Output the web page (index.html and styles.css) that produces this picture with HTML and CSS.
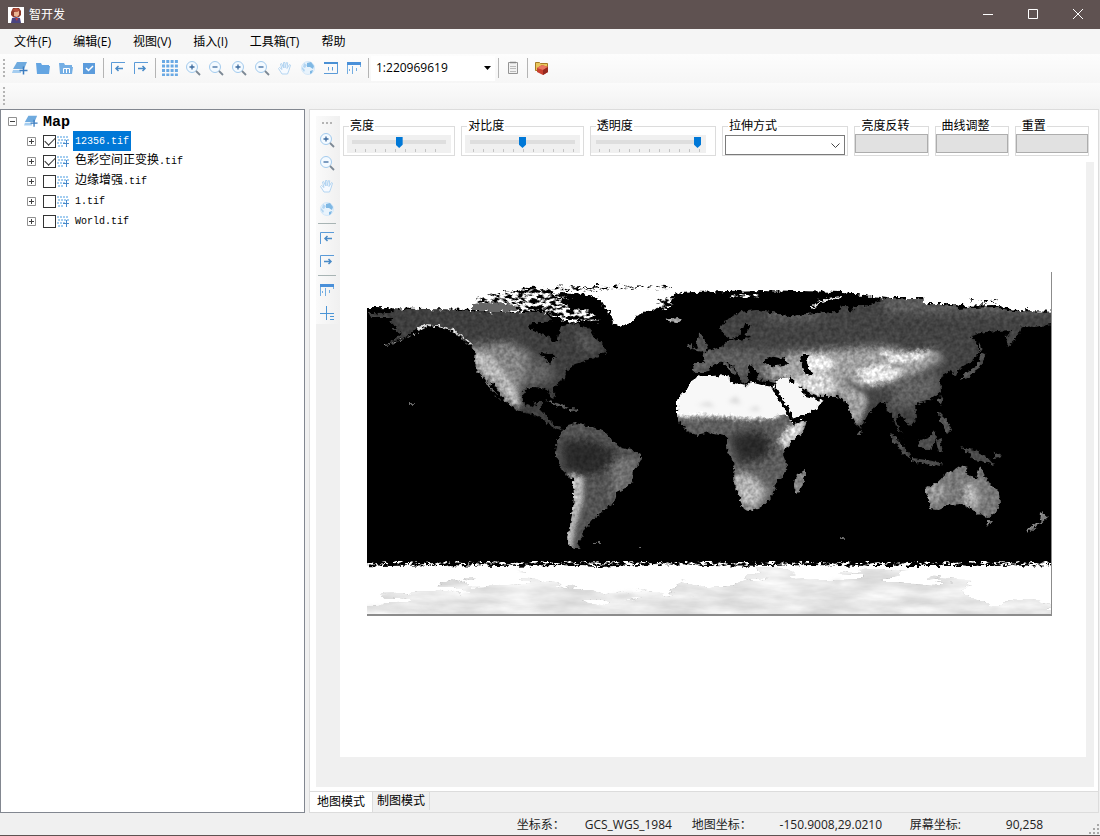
FILE: index.html
```html
<!DOCTYPE html>
<html lang="zh-CN">
<head>
  <meta charset="UTF-8">
  <meta name="viewport" content="width=device-width, initial-scale=1.0">
  <title>智开发</title>
  <link rel="stylesheet" href="styles.css">
</head>
<body>
  <svg class="sprite" aria-hidden="true">
    <symbol id="i-layer" viewBox="0 0 16 16"><path fill="#6faade" d="M5 2h10l-3 7H1z"/><path fill="#a5cdf0" d="M1 10h8v3H0z"/><path stroke="#3b7cc0" stroke-width="1.5" d="M11.500 6.500v8M7.500 10.500h8"/></symbol>
    <symbol id="i-folder" viewBox="0 0 16 16"><path fill="#64a5e2" d="M1 3h5l1 2h7v1h1l-1 8H2z"/></symbol>
    <symbol id="i-folder2" viewBox="0 0 16 16"><path fill="#74aee4" d="M1 3h5l1 2h7v2h1l-1 7H2z"/><path fill="none" stroke="#fff" d="M5.500 13V8.500h6V13M8.500 9v4"/></symbol>
    <symbol id="i-check" viewBox="0 0 16 16"><path fill="#5c9cdc" d="M2 3h12v11H2z"/><path fill="none" stroke="#fff" stroke-width="1.500" d="M5 8l2.500 2.500L12 6"/></symbol>
    <symbol id="i-prev" viewBox="0 0 16 16"><path fill="none" stroke="#5b9bd8" d="M1.500 14V2.500H15"/><path fill="none" stroke="#4a8bc8" stroke-width="1.500" d="M13 8.500H6M8.500 6L6 8.500 8.500 11"/></symbol>
    <symbol id="i-next" viewBox="0 0 16 16"><path fill="none" stroke="#5b9bd8" d="M1.500 14V2.500H15"/><path fill="none" stroke="#4a8bc8" stroke-width="1.500" d="M5 8.500h7M9.500 6L12 8.500 9.500 11"/></symbol>
    <symbol id="i-grid" viewBox="0 0 16 16"><path fill="none" stroke="#6aa9e4" stroke-width="3" stroke-dasharray="3 1.300" d="M0 1.500h16M0 6h16M0 10.500h16M0 15h16"/></symbol>
    <symbol id="i-zoomin" viewBox="0 0 16 16"><circle cx="7" cy="7" r="5.500" fill="#f4faff" stroke="#a3cbee"/><path stroke="#3c6a9e" stroke-width="1.300" d="M7 4.500v5M4.500 7h5"/><path stroke="#7c8894" stroke-width="1.800" d="M11 11l4 4"/></symbol>
    <symbol id="i-zoomout" viewBox="0 0 16 16"><circle cx="7" cy="7" r="5.500" fill="#f4faff" stroke="#a3cbee"/><path stroke="#3c6a9e" stroke-width="1.300" d="M4.500 7h5"/><path stroke="#7c8894" stroke-width="1.800" d="M11 11l4 4"/></symbol>
    <symbol id="i-hand" viewBox="0 0 16 16"><path fill="#f6faff" stroke="#b4d5f1" d="M5 14L1.500 8.500l1-1L5 9.500 3.500 4l1.200-.5L6.500 8V2.500H8V8l1.500-5.500 1.200.3L10 8.500l2.500-4 1 .6-1.500 5L10.500 14z"/></symbol>
    <symbol id="i-globe" viewBox="0 0 16 16"><circle cx="8" cy="8" r="6.500" fill="#e8f3fc" stroke="#d5e8f8"/><path fill="#b2d5f2" d="M2 7l3 3-1 2-2-3zM4 3l3 2-2 3-2-1z"/><path fill="#7fb8e4" d="M7 3l4-1 3 4-1 3-3-2-3 0zM10 11l3-1-1 3-2 1z"/></symbol>
    <symbol id="i-one" viewBox="0 0 16 16"><path fill="none" stroke="#5b9bd8" d="M1 3.500h13.500v10H1M5.500 7v3.500M9.500 7v3.500"/><path fill="#4a90d4" d="M1 2h14v2H1z"/></symbol>
    <symbol id="i-table" viewBox="0 0 16 16"><path fill="#4a90d9" d="M1 2h14v3H1z"/><path fill="none" stroke="#74aee2" d="M1.500 5v9M6.500 6v8M10.500 8v3M14.500 5v2M3.500 9v2"/></symbol>
    <symbol id="i-cross" viewBox="0 0 16 16"><path fill="none" stroke="#4b95d6" d="M1 8.500h14M7.500 1v14M11 11.500h4M11 14.500h4"/></symbol>
    <symbol id="i-clip" viewBox="0 0 16 16"><path fill="#f2f2f2" stroke="#949494" d="M3.500 2.500h9v11h-9z"/><path fill="none" stroke="#858585" stroke-width="1.500" d="M5 2.500h6"/><path stroke="#bbb" d="M5 6.500h6M5 8.500h6M5 11.500h6"/></symbol>
    <symbol id="i-toolbox" viewBox="0 0 16 16"><path fill="#e8c65c" stroke="#a77b25" d="M1.500 2.500h4l1 1h7v7h-12z"/><path fill="#c9402f" d="M3 8l5-3 6 2v5l-5 3-6-3z"/><path fill="#e87660" d="M3 8l5-3 6 2-5 3z"/><path fill="#96281f" d="M9 10l5-3v5l-5 3z"/></symbol>
    <symbol id="i-raster" viewBox="0 0 14 14"><path fill="none" stroke="#a3cdf0" stroke-width="2" stroke-dasharray="2 1" d="M1 3h12M2 6h11M1 9h8M2 12h6"/><path stroke="#4a8bcb" d="M10.500 6v7M7 9.500h6"/></symbol>
    <symbol id="i-plus" viewBox="0 0 9 9"><path fill="#fff" stroke="#919191" d="M.5.5h8v8h-8z"/><path stroke="#404040" d="M2 4.500h5M4.500 2v5"/></symbol>
    <symbol id="i-minus" viewBox="0 0 9 9"><path fill="#fff" stroke="#919191" d="M.5.5h8v8h-8z"/><path stroke="#404040" d="M2 4.500h5"/></symbol>
  </svg>

  <header class="titlebar">
    <svg class="app-icon" viewBox="0 0 16 16"><path fill="#fff" d="M0 0h16v16H0z"/><path fill="#8e3a2b" d="M3 5l2-4h6l2 3v4l-2 2H5L3 8z"/><path fill="#eab391" d="M6 5l5-1v4l-2 2-3-1z"/><path fill="#b5513d" d="M4 3l4-2 4 2-3 2z"/><path fill="#4a4480" d="M3 16l1-5 4-1 4 1 1 5z"/><path fill="#c23d36" d="M7 11h3l-1 3z"/></svg>
    <span class="app-name">智开发</span>
    <div class="win-buttons">
      <button aria-label="最小化"><svg viewBox="0 0 10 10"><path d="M0 5.500h10"/></svg></button>
      <button aria-label="最大化"><svg viewBox="0 0 10 10"><path d="M.5.5h9v9h-9z"/></svg></button>
      <button aria-label="关闭"><svg viewBox="0 0 10 10"><path d="M0 0l10 10M10 0L0 10"/></svg></button>
    </div>
  </header>

  <nav class="menubar">
    <button>文件(F)</button>
    <button>编辑(E)</button>
    <button>视图(V)</button>
    <button>插入(I)</button>
    <button>工具箱(T)</button>
    <button>帮助</button>
  </nav>

  <div class="toolbar">
    <span class="grip"></span>
    <button aria-label="添加图层"><svg><use href="#i-layer"/></svg></button>
    <button aria-label="打开"><svg><use href="#i-folder"/></svg></button>
    <button aria-label="打开地图"><svg><use href="#i-folder2"/></svg></button>
    <button aria-label="保存"><svg><use href="#i-check"/></svg></button>
    <span class="sep"></span>
    <button aria-label="上一视图"><svg><use href="#i-prev"/></svg></button>
    <button aria-label="下一视图"><svg><use href="#i-next"/></svg></button>
    <span class="sep"></span>
    <button aria-label="网格"><svg><use href="#i-grid"/></svg></button>
    <button aria-label="中心放大"><svg><use href="#i-zoomin"/></svg></button>
    <button aria-label="中心缩小"><svg><use href="#i-zoomout"/></svg></button>
    <button aria-label="放大"><svg><use href="#i-zoomin"/></svg></button>
    <button aria-label="缩小"><svg><use href="#i-zoomout"/></svg></button>
    <button aria-label="漫游"><svg><use href="#i-hand"/></svg></button>
    <button aria-label="全图"><svg><use href="#i-globe"/></svg></button>
    <button aria-label="原始比例"><svg><use href="#i-one"/></svg></button>
    <button aria-label="属性表"><svg><use href="#i-table"/></svg></button>
    <span class="sep"></span>
    <div class="combo scale">
      <select aria-label="比例尺"><option>1:220969619</option></select>
      <svg class="arrow" viewBox="0 0 8 4"><path d="M0 0h7L3.500 4z"/></svg>
    </div>
    <span class="sep"></span>
    <button aria-label="剪贴板"><svg><use href="#i-clip"/></svg></button>
    <span class="sep"></span>
    <button aria-label="工具箱"><svg><use href="#i-toolbox"/></svg></button>
  </div>
  <div class="toolbar second"><span class="grip"></span></div>

  <main class="workspace">
    <aside class="tree">
      <ul>
        <li class="root"><svg class="exp"><use href="#i-minus"/></svg><svg class="layer"><use href="#i-layer"/></svg><b>Map</b></li>
        <li><svg class="exp"><use href="#i-plus"/></svg><input type="checkbox" id="l1" checked><svg class="layer"><use href="#i-raster"/></svg><label for="l1" class="selected">12356.tif</label></li>
        <li><svg class="exp"><use href="#i-plus"/></svg><input type="checkbox" id="l2" checked><svg class="layer"><use href="#i-raster"/></svg><label for="l2"><span>色彩空间正变换</span>.tif</label></li>
        <li><svg class="exp"><use href="#i-plus"/></svg><input type="checkbox" id="l3"><svg class="layer"><use href="#i-raster"/></svg><label for="l3"><span>边缘增强</span>.tif</label></li>
        <li><svg class="exp"><use href="#i-plus"/></svg><input type="checkbox" id="l4"><svg class="layer"><use href="#i-raster"/></svg><label for="l4">1.tif</label></li>
        <li><svg class="exp"><use href="#i-plus"/></svg><input type="checkbox" id="l5"><svg class="layer"><use href="#i-raster"/></svg><label for="l5">World.tif</label></li>
      </ul>
    </aside>

    <section class="tabs">
      <div class="page">
        <div class="side-tools">
          <div class="vbar">
            <span class="grip"></span>
            <button aria-label="放大"><svg><use href="#i-zoomin"/></svg></button>
            <button aria-label="缩小"><svg><use href="#i-zoomout"/></svg></button>
            <button aria-label="漫游"><svg><use href="#i-hand"/></svg></button>
            <button aria-label="全图"><svg><use href="#i-globe"/></svg></button>
            <span class="sep"></span>
            <button aria-label="上一视图"><svg><use href="#i-prev"/></svg></button>
            <button aria-label="下一视图"><svg><use href="#i-next"/></svg></button>
            <span class="sep"></span>
            <button aria-label="属性表"><svg><use href="#i-table"/></svg></button>
            <button aria-label="十字线"><svg><use href="#i-cross"/></svg></button>
          </div>
        </div>
        <div class="content">
          <form class="controls">
            <fieldset class="g-light"><legend>亮度</legend><div class="slider"><input type="range" aria-label="亮度" value="50"></div></fieldset>
            <fieldset class="g-contrast"><legend>对比度</legend><div class="slider"><input type="range" aria-label="对比度" value="50"></div></fieldset>
            <fieldset class="g-wide"><legend>透明度</legend><div class="slider short"><input type="range" aria-label="透明度" value="100"></div></fieldset>
            <fieldset class="g-wide"><legend>拉伸方式</legend><div class="combo stretch"><select aria-label="拉伸方式"><option></option></select><svg class="arrow" viewBox="0 0 9 5"><path d="M.5.5l4 4 4-4"/></svg></div></fieldset>
            <fieldset class="g-button"><legend>亮度反转</legend><button type="button" aria-label="亮度反转"></button></fieldset>
            <fieldset class="g-button"><legend>曲线调整</legend><button type="button" aria-label="曲线调整"></button></fieldset>
            <fieldset class="g-button"><legend>重置</legend><button type="button" aria-label="重置"></button></fieldset>
          </form>
          <div class="canvas">
            <svg class="map" viewBox="367 272 685 344" role="img" aria-label="World">
              <defs>
                <filter id="rough" x="-5%" y="-5%" width="110%" height="110%" color-interpolation-filters="sRGB">
                  <feTurbulence type="fractalNoise" baseFrequency=".2" numOctaves="3" seed="4" result="n"/>
                  <feDisplacementMap in="SourceGraphic" in2="n" scale="8" xChannelSelector="R" yChannelSelector="G"/>
                </filter>
                <filter id="land" x="-5%" y="-5%" width="110%" height="110%" color-interpolation-filters="sRGB">
                  <feTurbulence type="fractalNoise" baseFrequency=".25" numOctaves="4" seed="9" result="n"/>
                  <feDisplacementMap in="SourceGraphic" in2="n" scale="6" xChannelSelector="R" yChannelSelector="G" result="d"/>
                  <feColorMatrix in="n" type="matrix" values="1.600 0 0 0 -.3  1.600 0 0 0 -.3  1.600 0 0 0 -.3  0 0 0 0 1" result="g"/>
                  <feComposite in="d" in2="g" operator="arithmetic" k1=".4" k2=".78" k3="0" k4="0"/>
                </filter>
                <filter id="ice" x="-5%" y="-5%" width="110%" height="110%" color-interpolation-filters="sRGB">
                  <feTurbulence type="fractalNoise" baseFrequency=".02 .08" numOctaves="4" seed="3" result="n"/>
                  <feDisplacementMap in="SourceGraphic" in2="n" scale="40" xChannelSelector="R" yChannelSelector="G" result="d"/>
                  <feColorMatrix in="n" type="matrix" values="1 0 0 0 0  1 0 0 0 0  1 0 0 0 0  0 0 0 0 1" result="g"/>
                  <feComposite in="d" in2="g" operator="arithmetic" k1=".25" k2=".84" k3="0" k4="0"/>
                </filter>
                <filter id="speckle" color-interpolation-filters="sRGB">
                  <feTurbulence type="fractalNoise" baseFrequency=".16 .3" numOctaves="4" seed="7" result="n"/>
                  <feColorMatrix type="matrix" values="5 0 0 0 -2  5 0 0 0 -2  5 0 0 0 -2  0 0 0 0 1" result="s"/>
                  <feDisplacementMap in="SourceGraphic" in2="n" scale="12" xChannelSelector="R" yChannelSelector="G" result="d"/>
                  <feComposite in="s" in2="d" operator="in"/>
                </filter>
                <filter id="soft" x="-50%" y="-50%" width="200%" height="200%"><feGaussianBlur stdDeviation="4"/></filter>
                <filter id="soft2" x="-50%" y="-50%" width="200%" height="200%"><feGaussianBlur stdDeviation="2"/></filter>
                <clipPath id="c-america"><path id="america" d="M368 312L380 314 395 310 430 308 470 311 520 312 545 312 552 320 545 323 532 323 529 328 537 333 548 336 553 342 558 341 559 334 562 325 575 323 590 329 595 338 603 345 606 353 596 356 585 361 575 364 566 372 565 378 556 385 553 389 556 398 551 397 547 389 535 387 525 389 522 395 524 404 533 407 536 402 543 402 540 410 547 417 553 425 562 427 557 430 548 424 538 416 525 413 512 407 504 400 494 384 490 382 499 397 500 400 492 391 485 379 477 370 474 360 475 352 470 345 462 340 452 331 440 327 428 325 420 327 405 337 390 343 402 334 393 329 388 322 372 319z"/></clipPath>
                <clipPath id="c-south"><path id="south" d="M561 431L568 425 575 423 590 426 605 432 612 440 622 448 632 450 641 455 641 460 634 470 632 482 625 488 617 492 614 503 605 509 600 515 595 517 590 523 585 528 582 533 583 537 578 543 577 546 582 549 574 549 568 543 567 538 570 525 573 510 574 495 573 479 566 475 559 464 555 453 557 440 561 435z"/></clipPath>
                <clipPath id="c-africa"><path id="africa" d="M677 412L677 400 685 392 692 383 700 376 712 376 727 375 730 382 745 386 750 382 765 386 774 388 780 400 789 416 793 424 807 421 803 432 792 441 786 448 783 455 787 465 785 473 778 480 775 488 770 498 762 507 750 510 744 509 740 500 736 488 732 478 735 468 732 460 726 448 727 440 724 435 710 432 697 435 688 432 680 424 677 418z"/></clipPath>
                <clipPath id="c-eurasia"><path id="eurasia" d="M693 362L705 362 702 353 712 350 722 346 728 341 738 340 750 338 745 334 748 325 742 329 738 337 733 339 724 335 720 329 727 320 740 312 758 310 778 313 787 317 800 315 815 313 838 312 842 305 848 305 850 313 855 306 866 306 885 298 924 299 926 304 955 305 957 309 993 307 1013 311 1052 312 1052 324 1035 327 1022 326 1015 340 1008 346 1006 338 1011 330 985 332 971 336 978 345 978 355 970 362 960 368 956 377 951 370 944 374 940 381 941 392 930 400 920 403 915 406 917 417 910 427 905 420 900 414 896 419 900 431 904 438 896 426 892 415 887 411 885 402 880 402 875 407 867 416 861 428 857 426 852 417 848 404 838 396 820 396 812 394 802 388 790 376 778 377 775 383 767 381 758 380 757 371 750 364 748 374 748 382 742 383 738 374 730 363 726 362 737 373 733 374 722 362 710 367 706 373 694 373z"/></clipPath>
                <clipPath id="c-aus"><path id="aus" d="M926 487L938 482 945 474 955 470 961 466 968 468 966 474 976 479 980 466 984 475 990 484 999 493 1000 503 996 513 988 517 978 514 970 508 962 505 945 506 937 510 930 509 929 500 926 493z"/></clipPath>
              </defs>

              <path d="M367 300h685v268H367z"/>
              <path d="M555 290h498v14H555z"/>

              <!-- America -->
              <g filter="url(#land)">
                <use href="#america" fill="#404040"/>
                <g clip-path="url(#c-america)">
                  <path filter="url(#soft)" fill="#878787" d="M470 345l40-3 22 12-2 22-20 30-20-12-20-40z"/>
                  <path filter="url(#soft2)" fill="#b9b9b9" d="M474 352l16 2 10 12 16 22 6 20-12-4-10-18-22-16z"/>
                  <path filter="url(#soft)" fill="#656565" d="M528 360l20 0 8 18-30 12zM575 328l25 20-15 2z"/>
                </g>
                <path fill="#606060" d="M545 400l12 3 12 5-2 2-14-6zM570 408l9 1-1 3-8-1z"/>
              </g>
              <path filter="url(#land)" fill="none" stroke="#ddd" stroke-width="2" stroke-dasharray="9 1 5 2" d="M418 329l8-4 12 1 14 4 8 5 12 10"/>
              <path filter="url(#land)" fill="none" stroke="#888" stroke-dasharray="5 3" d="M384 346l12-4 14-6 9-3"/>
              <path filter="url(#land)" fill="#000" d="M538 353l14 1 6 4-5 1-4 6-3-7zM492 384l9 14-3 0-8-12zM367 306h30l-8 7h-22zM367 318h26l-4 4 8 6h-30z"/>
              <g filter="url(#land)">
                <use href="#south" fill="#555"/>
                <g clip-path="url(#c-south)">
                  <path filter="url(#soft)" fill="#2a2a2a" d="M562 440l30 0 28 14-4 10-28 12-24-6z"/>
                  <path filter="url(#soft)" fill="#737373" d="M612 458l28 0-10 30-18 12z"/>
                  <path filter="url(#soft2)" fill="#bcbcbc" d="M568 474l16 3-1 24-8 28-3 20-8 0 8-50z"/>
                </g>
              </g>

              <!-- Africa and Arabia -->
              <g filter="url(#land)">
                <use href="#africa" fill="#606060"/>
                <g clip-path="url(#c-africa)">
                  <path filter="url(#soft2)" fill="#fff" d="M670 370h112l3 38-8 10-28 1-30-2-49 0z"/>
                  <path filter="url(#soft2)" fill="#ddd" d="M786 428l22-10-8 18-14 12-8-4z"/>
                  <path filter="url(#soft)" fill="#2c2c2c" d="M730 436l28-6 14 10-4 18-28 6z"/>
                  <path filter="url(#soft)" fill="#bdbdbd" d="M732 474l18 0 18 16-14 22-16-10z"/>
                </g>
                <path fill="#898989" d="M803 470l2-1 0 8-5 15-5 1-2-7 3-10z"/>
              </g>
              <path filter="url(#rough)" fill="#f8f8f8" d="M777 376l8 1 16 9 2 5 9 6 11 4-7 8-16 10-9 1-6-10-7-14-4-10z"/>
              <path filter="url(#rough)" fill="#f8f8f8" d="M680 398l6-7 8-12 8-3 24 0 3 8 16 3 8-3 21 3 8 16 6 11-22 3-30-2-36-2-20 2z"/>
              <path filter="url(#soft2)" fill="#bbb" d="M697 405l12-3 6 5zM728 402l8-6 5 8zM748 410l9-4 3 5z" opacity=".5"/>
              <path filter="url(#land)" fill="none" stroke="#000" stroke-width="4" d="M774 387l6 12 6 8 6 12M801 386l5 8 9 2"/>
              <path filter="url(#land)" fill="none" stroke="#000" stroke-width="3" d="M791 421l14-5 6-2"/>

              <!-- Eurasia -->
              <g filter="url(#land)">
                <use href="#eurasia" fill="#444"/>
                <g clip-path="url(#c-eurasia)">
                  <path filter="url(#soft)" fill="#606060" d="M690 350h110v26H690zM885 295h167v18H885zM770 308h50v12h-50z"/>
                  <path filter="url(#soft)" fill="#a5a5a5" d="M795 352l60-4 30-2 30 8 20-4 10 8-30 18-26 8-34 6-20 8-40-2-20-16-15-8z"/>
                  <path filter="url(#soft2)" fill="#eee" d="M802 354l24 2 12 8-14 8-14 2zM856 372l24-8 24 8-10 8-28 4zM880 349l18 5 36-3-14 9-28 3z"/>
                  <path filter="url(#soft2)" fill="#ddd" d="M778 377l24 2 24 4 14 6-14 6-14-2zM802 370l30 6 2 8-30-6z"/>
                  <path filter="url(#soft2)" fill="#a5a5a5" d="M838 388l26 0 4 14-10 24-10-16z"/>
                  <path filter="url(#soft)" fill="#646464" d="M894 382l44-10 2 20-22 12-26 4z"/>
                </g>
                <path fill="#555" d="M691 350l7-2-2-6 4-9 5 6 3 10-4 3zM688 346l4-3 1 5-5 2zM986 355l-7 14-12 8-7 2 8-7 9-6 4-12zM979 342l3 10-3-1zM940 395l3 5-2 5-3-5zM939 412l8 8 5 10-4 4-8-14z"/>
                <path fill="#aaa" d="M665 319l12-2 6 2-5 4-9-1z"/>
              </g>
              <path filter="url(#land)" fill="#000" d="M763 363l5-6 10 2 6-2 5 7-14 2zM800 355l9 0-3 6 6 13-6 1-4-9zM745 324l-3 8-7 6 10 1 1-6 5-9z"/>
              <path filter="url(#soft2)" fill="#444" d="M845 376l12 11 22 6-1 3-20-5-14-12z"/>

              <!-- Oceania -->
              <g filter="url(#land)">
                <path fill="#4d4d4d" d="M890 433l8 6 10 14 3 6-8-5-12-17zM912 458l14 2 16 3-1 3-16-2-13-3zM920 440l10-4 5-6 1 8-5 12-8 0-5-6zM936 440l8-2-4 5 2 9-4 0zM960 447l14 3 12 6 8 9-8-3-12-2-6-8zM995 452l8 5-9 2z"/>
                <path fill="#888" d="M1041 512l7 6-8 7zM1040 523l-10 9-4 0 10-9zM986 521l6 0-4 5z"/>
                <use href="#aus" fill="#7b7b7b"/>
                <g clip-path="url(#c-aus)">
                  <path filter="url(#soft)" fill="#ddd" d="M966 485l8 0 4 20-10 2z"/>
                  <path filter="url(#soft2)" fill="#999" d="M926 485l15-3 8 10-20 16z"/>
                </g>
                <path fill="#555" d="M858 431l3-2 1 5-3 1z"/>
                <path fill="#666" d="M594 542h7v2h-7zM638 547h4v1h-4zM840 537h4v2h-4zM410 403h4v2h-4z"/>
              </g>

              <!-- Arctic -->
              <path filter="url(#rough)" fill="#fff" d="M340 250h740v61l-65-1-22-5-34 1-4-2-30 0-2-6-36 0-45-6-44-1-36-1-68 2-20 2-8 6-12 10-14 4-10 8-9 6-7-5-6-14-10-10-14-5-22-2-14 6-20-2-45 4-7 10-100-2h-51z"/>
              <path filter="url(#speckle)" fill="#fff" d="M476 300l24-6 42-6 14 7 24 8 22 12-4 7-14-4-10 5-20-6-14-8-24 3-38-1z"/>
              <path filter="url(#speckle)" fill="#fff" d="M520 288l150-2 2 2-150 3zM656 302l18-6-2 10-14 4zM970 300l22 0 6 2-28 0z"/>
              <path filter="url(#rough)" fill="#666" d="M473 304l16-2 25 3 5 6-46 0z"/>
              <path filter="url(#rough)" fill="none" stroke="#eee" stroke-width="2" d="M812 308l8-7 20-4"/>
              <path filter="url(#speckle)" fill="none" stroke="#eee" stroke-width="5" d="M731 296l12 1 16-2"/>
              <path filter="url(#rough)" fill="#000" d="M560 299l24-2 19 6 8 18 8 8-14-5-18-14-20-4z"/>

              <!-- Antarctica -->
              <path filter="url(#rough)" fill="#fff" d="M340 564l50 2 50-1 60 1 60-1 40 2 50-3 60 1 60 1 40-1 60 1 60 0 60 0 90-1v80H340z"/>
              <path filter="url(#speckle)" fill="#fff" d="M367 562h685v3H367z"/>
              <g filter="url(#ice)">
                <path fill="#f0f0f0" d="M340 604l70-4 10-8 50-9 60-4 30 6 20 10 30 6 40-8 40-8 35-3 25-9 40 4 90-4 50 4 40 2 10 6-10 8 8 10 90 4v80H340z"/>
              </g>
              <path filter="url(#soft2)" fill="#d5d5d5" d="M367 607l65 3h-65zM610 596l20-3 6 3-16 3zM830 582l11-2-2 5zM700 604l200-1v2H700z"/>
              <path fill="#8c8c8c" d="M367 614h685v2H367zM1051 272h1v344h-1z"/>
            </svg>
          </div>
        </div>
      </div>
      <div class="tab-strip">
        <button class="active">地图模式</button>
        <button>制图模式</button>
      </div>
    </section>
  </main>

  <footer class="status">
    <span>坐标系：</span><span class="value">GCS_WGS_1984</span>
    <span>地图坐标：</span><span class="value wide">-150.9008,29.0210</span>
    <span>屏幕坐标:</span><span class="value">90,258</span>
    <svg class="resize" viewBox="0 0 12 12"><path fill="#a8a8a8" d="M9 1h2v2H9zM5 5h2v2H5zM9 5h2v2H9zM1 9h2v2H1zM5 9h2v2H5zM9 9h2v2H9z"/></svg>
  </footer>
</body>
</html>
```
FILE: styles.css
```css
* {
  box-sizing: border-box;
}
body {
  margin: 0;
  height: 100vh;
  display: flex;
  flex-direction: column;
  background: #f0f0f0;
  color: #000;
  font: 12px/16px "Open Sans", "Noto Sans CJK SC", sans-serif;
  border-bottom: 1px solid #5f5251;
  overflow: hidden;
}
button, select, input {
  font: inherit;
  color: inherit;
  margin: 0;
}
button {
  border: none;
  background: none;
  padding: 0;
}
svg {
  display: block;
  flex-shrink: 0;
}
.sprite {
  display: none;
}

/* title bar and menu */
.titlebar {
  height: 29px;
  display: flex;
  align-items: center;
  padding-left: 8px;
  gap: 5px;
  background: #5f5251;
  color: #fff;
  flex-shrink: 0;
}
.app-icon {
  width: 16px;
  height: 16px;
}
.app-name {
  line-height: 18px;
}
.win-buttons {
  display: flex;
  align-self: flex-start;
  margin-left: auto;
}
.win-buttons button {
  width: 45px;
  height: 27px;
  display: grid;
  place-items: center;
}
.win-buttons svg {
  width: 10px;
  height: 10px;
  fill: none;
  stroke: #fff;
}
.menubar {
  height: 25px;
  display: flex;
  gap: 2px;
  padding-left: 4px;
  background: #f5f5f5;
  flex-shrink: 0;
}
.menubar button {
  padding: 0 10px;
}

/* toolbars */
.toolbar {
  height: 29px;
  display: flex;
  align-items: center;
  padding: 0 0 1px 3px;
  background: linear-gradient(#fdfdfd, #f6f6f6);
  flex-shrink: 0;
}
.toolbar.second {
  height: 26px;
  background: linear-gradient(#fbfbfb, #f2f2f2);
}
.grip {
  width: 2px;
  height: 18px;
  margin-right: 3px;
  background: repeating-linear-gradient(#b4b4b4 0 2px, transparent 2px 4px);
}
.toolbar button, .vbar button {
  width: 23px;
  height: 23px;
  display: grid;
  place-items: center;
}
.toolbar button svg, .vbar button svg {
  width: 16px;
  height: 16px;
}
.sep {
  width: 6px;
  height: 20px;
  background: linear-gradient(#b4b4b4, #b4b4b4) 3px 0 / 1px 100% no-repeat;
}
.combo {
  display: grid;
  align-items: center;
}
.combo select, .combo .arrow {
  grid-area: 1 / 1;
}
.combo select {
  appearance: none;
  width: 100%;
  border: none;
  border-radius: 0;
  background: #fff;
}
.combo .arrow {
  justify-self: end;
  pointer-events: none;
}
.scale {
  width: 124px;
}
.scale select {
  height: 25px;
  padding: 0 5px;
}
.scale .arrow {
  width: 8px;
  height: 4px;
  margin-right: 3px;
}

/* layer tree */
.workspace {
  flex: 1;
  min-height: 0;
  display: flex;
  gap: 4px;
}
.tree {
  width: 305px;
  flex-shrink: 0;
  border: 1px solid #828790;
  background: #fff;
}
.tree ul {
  list-style: none;
  margin: 0;
  padding: 1px 0 0 7px;
}
.tree li {
  height: 20px;
  display: flex;
  align-items: center;
  padding-left: 19px;
}
.tree li.root {
  padding-left: 0;
}
.root b {
  font: bold 15px/16px "Liberation Mono", monospace;
  margin-left: 5px;
  padding-top: 4px;
}
.exp {
  width: 9px;
  height: 9px;
  margin-right: 7px;
}
.layer {
  width: 14px;
  height: 14px;
}
.tree input {
  appearance: none;
  width: 13px;
  height: 13px;
  border: 1px solid #333;
  background: #fff;
  display: grid;
  place-items: center;
}
.tree input:checked::before {
  content: "";
  width: 9px;
  height: 5px;
  border: solid #333;
  border-width: 0 0 1px 1px;
  transform: rotate(-45deg);
  margin-bottom: 3px;
}
.tree label {
  margin-left: 3px;
  padding: 1px 2px 0;
  font: 10px/19px "Liberation Mono", "Noto Sans CJK SC", monospace;
}
.tree label span {
  font-size: 12px;
}
.tree .selected {
  background: #0078d7;
  color: #fff;
}

/* map page */
.tabs {
  flex: 1;
  min-width: 0;
  display: flex;
  flex-direction: column;
  margin-right: 1px;
  border: 1px solid #dcdcdc;
}
.page {
  flex: 1;
  min-height: 0;
  display: flex;
  padding: 6px 4px 4px 6px;
  background: #fff;
}
.side-tools {
  width: 24px;
  background: #f0f0f0;
}
.vbar {
  display: flex;
  flex-direction: column;
  align-items: center;
  padding-right: 2px;
  background: linear-gradient(90deg, #fafafa, #f0f0f0);
}
.vbar .grip {
  width: 11px;
  height: 2px;
  margin: 6px 0 4px;
  background: repeating-linear-gradient(90deg, #b4b4b4 0 2px, transparent 2px 4px);
}
.vbar .sep {
  width: 18px;
  height: 6px;
  background: linear-gradient(#a8b4b4, #a8b4b4) 0 3px / 100% 1px no-repeat;
}
.content {
  flex: 1;
  min-width: 0;
  display: flex;
  flex-direction: column;
  background: #f0f0f0;
}
.controls {
  display: flex;
  gap: 6px;
  height: 46px;
  padding: 2px 5px 6px 3px;
  background: #fff;
}
fieldset {
  min-width: 0;
  margin: 0;
  padding: 0;
  border: 1px solid #dcdcdc;
  flex: 72 1 0;
}
.g-light {
  flex-grow: 110;
}
.g-contrast {
  flex-grow: 120;
}
.g-wide {
  flex-grow: 124;
}
legend {
  margin-left: 5px;
  padding: 0 1px;
  line-height: 16px;
}
.slider {
  height: 18px;
  margin: 1px 3px 0;
  padding: 2px 5px 0;
  background: repeating-linear-gradient(90deg, #c4c4c4 0 1px, transparent 1px 10px) 8px 14px / calc(100% - 14px) 3px no-repeat #f0f0f0;
}
.slider.short {
  margin-left: 0;
  margin-right: 9px;
}
.slider input {
  appearance: none;
  display: block;
  width: 100%;
  height: 11px;
  background: linear-gradient(#dedede, #dedede) 0 3px / 100% 4px no-repeat;
}
.slider input::-webkit-slider-thumb {
  appearance: none;
  width: 7px;
  height: 11px;
  background: #0078d7;
  clip-path: polygon(0 0, 100% 0, 100% 70%, 50% 100%, 0 70%);
}
.stretch {
  margin: 1px 2px 0;
}
.stretch select {
  height: 20px;
  border: 1px solid #7a7a7a;
}
.stretch .arrow {
  width: 9px;
  height: 5px;
  margin-right: 5px;
  fill: none;
  stroke: #444;
}
.g-button button {
  display: block;
  width: 100%;
  height: 19px;
  background: #e1e1e1;
  border: 1px solid #adadad;
}
.canvas {
  flex: 1;
  min-height: 0;
  margin: 0 8px 30px 0;
  padding: 110px 34px 0 27px;
  background: #fff;
}
.map {
  width: 100%;
  overflow: hidden;
}
.tab-strip {
  height: 21px;
  display: flex;
  align-items: flex-start;
  border-top: 1px solid #dcdcdc;
}
.tab-strip button {
  height: 18px;
  padding: 0 4px;
  border-right: 1px solid #dcdcdc;
}
.tab-strip .active {
  height: 20px;
  padding: 0 7px;
  background: #fff;
}

/* status bar */
.status {
  height: 22px;
  display: flex;
  justify-content: flex-end;
  align-items: center;
  color: #222;
  flex-shrink: 0;
}
.status span {
  padding-top: 2px;
}
.value {
  width: 127px;
  text-align: center;
}
.value.wide {
  width: 158px;
}
.resize {
  width: 12px;
  height: 12px;
  align-self: flex-end;
}
```
